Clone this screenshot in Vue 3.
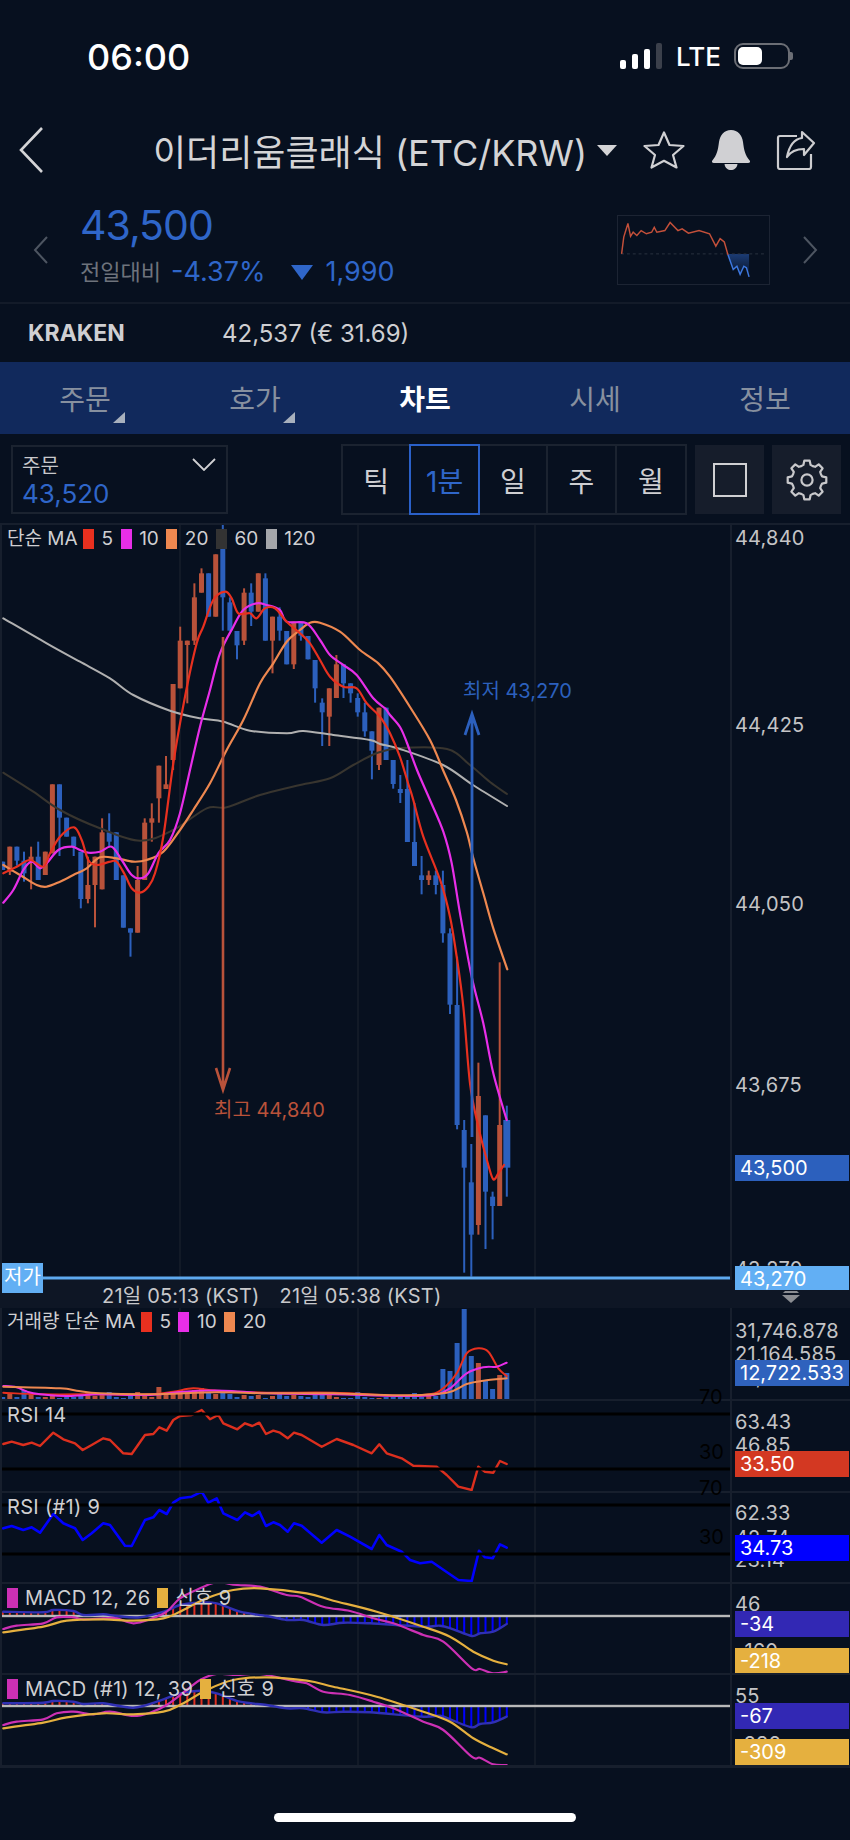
<template>
  <div class="screen">
    <!-- status bar -->
    <div class="status">
      <span class="clock">06:00</span>
      <div class="status-right">
        <div class="signal">
          <i v-for="(h, n) in [9, 15, 20, 26]" :key="n" :class="{ off: n === 3 }" :style="{ height: h + 'px' }"></i>
        </div>
        <span class="lte">LTE</span>
        <div class="battery"><b></b></div>
        <div class="nub"></div>
      </div>
    </div>

    <!-- title row -->
    <header class="head">
      <svg class="back" width="26" height="48" viewBox="0 0 26 48">
        <path d="M24 2 L3 24 L24 46" fill="none" stroke="#d4d4d6" stroke-width="2.6" />
      </svg>
      <h1 class="title">이더리움클래식 (ETC/KRW)</h1>
      <span class="title-caret"></span>
      <svg class="star" width="42" height="38" viewBox="0 0 42 38">
        <path d="M21 1.5 L26.5 14 L40.5 15 L30 24 L33.5 36.5 L21 29.8 L8.5 36.5 L12 24 L1.5 15 L15.5 14Z" fill="none" stroke="#d0d0d3" stroke-width="2.2" stroke-linejoin="round" />
      </svg>
      <svg class="bell" width="38" height="40" viewBox="0 0 38 40">
        <path d="M19 0 C26 0 30 5 31 12 C32 20 33 25 38 31 Q38.5 33 36 33 H2 Q-.5 33 0 31 C5 25 6 20 7 12 C8 5 12 0 19 0Z M12.5 34 H25.5 C25 38 22 40 19 40 C16 40 13 38 12.5 34Z" fill="#d0d0d3" />
      </svg>
      <svg class="share" width="42" height="40" viewBox="0 0 42 40">
        <path d="M22 6 H5 Q3 6 3 8 V37 Q3 39 5 39 H34 Q36 39 36 37 V24" fill="none" stroke="#cdcdd0" stroke-width="2.2" />
        <path d="M27 2 L39 13 L29 25 V19 C21 19 16 21 12 27 C14 17 19 9 27 8Z" fill="none" stroke="#cdcdd0" stroke-width="2.2" stroke-linejoin="round" />
      </svg>
    </header>

    <!-- price row -->
    <section class="price-row">
      <svg class="nav-arrow" width="15" height="28" viewBox="0 0 15 28">
        <path d="M14 1 L2 14 L14 27" fill="none" stroke="#4d5561" stroke-width="2" />
      </svg>
      <div class="price-info">
        <div class="price">43,500</div>
        <div class="change">
          <span class="change-label">전일대비</span>
          <span class="change-pct">-4.37%</span>
          <span class="change-tri"></span>
          <span class="change-abs">1,990</span>
        </div>
      </div>
      <svg class="mini" width="153" height="70" viewBox="617 215 153 70">
        <defs>
          <linearGradient id="miniFill" x1="0" y1="0" x2="0" y2="1">
            <stop offset="0" stop-color="#2c60bd" stop-opacity="0.55" />
            <stop offset="1" stop-color="#2c60bd" stop-opacity="0" />
          </linearGradient>
        </defs>
        <path :d="miniFill" fill="url(#miniFill)" />
        <path d="M619 254 H766" stroke="#2a3240" stroke-width="1" stroke-dasharray="3 3" />
        <path :d="miniRed" fill="none" stroke="#c4503a" stroke-width="1.5" />
        <path :d="miniBlue" fill="none" stroke="#3d78e0" stroke-width="1.5" />
      </svg>
      <svg class="nav-arrow next" width="15" height="28" viewBox="0 0 15 28">
        <path d="M1 1 L13 14 L1 27" fill="none" stroke="#4d5561" stroke-width="2" />
      </svg>
    </section>

    <section class="exchange">
      <span class="ex-name">KRAKEN</span>
      <span class="ex-price">42,537 (€ 31.69)</span>
    </section>

    <!-- tabs -->
    <nav class="tabs">
      <div v-for="t in tabs" :key="t.name" class="tab" :class="{ active: t.active }">
        {{ t.name }}
        <i v-if="t.corner" class="corner"></i>
      </div>
    </nav>

    <!-- chart controls -->
    <section class="controls">
      <div class="order-box">
        <div>
          <div class="order-label">주문</div>
          <div class="order-price">43,520</div>
        </div>
        <svg class="order-caret" width="24" height="13" viewBox="0 0 24 13">
          <path d="M1 1 L12 12 L23 1" fill="none" stroke="#d0d0d3" stroke-width="1.8" />
        </svg>
      </div>
      <div class="periods">
        <div v-for="p in periods" :key="p" class="period" :class="{ active: p === '1분' }">{{ p }}</div>
      </div>
      <button class="icon-btn first"><span class="square"></span></button>
      <button class="icon-btn">
        <svg width="42" height="42" viewBox="-21 -21 42 42">
          <path :d="gearPath" fill="none" stroke="#c8c8cb" stroke-width="2.2" stroke-linejoin="round" />
          <circle r="5.6" fill="none" stroke="#c8c8cb" stroke-width="2.2" />
        </svg>
      </button>
    </section>

    <!-- chart stack -->
    <section class="chart">
      <template v-for="p in panels" :key="p.id">
        <div class="panel" :class="p.id" :style="{ height: p.h + 'px' }">
          <svg class="plot" width="728" :height="p.h" :viewBox="`2 ${p.top} 728 ${p.h}`">
            <rect v-for="x in gridX" :key="x" :x="x - 1" :y="p.top" width="2" :height="p.h" fill="#121a27" />
            <rect v-for="(b, n) in p.bars || []" :key="'b' + n" :x="b.x" :y="b.y" :width="b.w" :height="b.h" :fill="b.c" />
            <template v-if="p.candles">
              <g v-for="(c, n) in candles" :key="'c' + n" :fill="c.c">
                <rect :x="c.x - 1" :y="c.wt" width="2" :height="c.wb - c.wt" />
                <rect :x="c.x - c.w / 2" :y="c.bt" :width="c.w" :height="c.bb - c.bt" />
              </g>
            </template>
            <rect v-if="p.zero" x="2" :y="p.zero - 1.2" width="728" height="2.4" fill="#b9b9b9" />
            <path v-for="(l, n) in p.lines" :key="'l' + n" :d="l.d" fill="none" :stroke="l.c" :stroke-width="l.w || 2" stroke-linejoin="round" stroke-linecap="round" />
            <rect v-for="y in p.black || []" :key="y" x="2" :y="y - 1.5" width="728" height="3" fill="#000" />
            <template v-if="p.candles">
              <path d="M223 637 V1088 M216 1068 L223 1090 L230 1068" fill="none" stroke="#b9523a" stroke-width="2.6" />
              <path d="M472 715 V1137 M465 735 L472 714 L479 735" fill="none" stroke="#2c60bd" stroke-width="2.8" />
              <rect x="2" y="1276.5" width="728" height="3" fill="#5ea9ef" />
            </template>
          </svg>

          <div class="legend">
            <template v-for="(item, n) in p.legend" :key="n">
              <i v-if="item.c" class="swatch" :style="{ background: item.c }"></i>
              <span v-else>{{ item.t }}</span>
            </template>
          </div>

          <template v-if="p.candles">
            <span class="note note-high">최고 44,840</span>
            <span class="note note-low">최저 43,270</span>
            <span class="low-tag">저가</span>
          </template>

          <span v-for="m in p.marks || []" :key="m.y" class="mark" :style="{ top: m.y - p.top - 14 + 'px' }">{{ m.t }}</span>

          <div class="axis">
            <span v-for="a in p.axis" :key="a.t" class="tick" :style="{ top: a.y - p.top - 12 + 'px' }">{{ a.t }}</span>
            <span v-for="g in p.tags" :key="g.t" class="tag" :style="{ top: g.y - p.top + 'px', height: g.h + 'px', background: g.c }">{{ g.t }}</span>
          </div>
        </div>

        <div v-if="p.candles" class="time-strip">
          <span>21일 05:13 (KST)</span>
          <span>21일 05:38 (KST)</span>
          <svg class="scroll-hint" width="18" height="12" viewBox="0 0 18 12">
            <path d="M3 0 H15 L17 2 H1Z M0 4 H18 L9 12Z" fill="#8b8d92" />
          </svg>
        </div>
      </template>
    </section>

    <div class="home"></div>
  </div>
</template>

<script setup>
const tabs = [
  { name: '주문', corner: true },
  { name: '호가', corner: true },
  { name: '차트', active: true },
  { name: '시세' },
  { name: '정보' },
]
const periods = ['틱', '1분', '일', '주', '월']
const gridX = [180, 358, 535]

const RED = '#b9523a'
const BLUE = '#2c60bd'

// path helpers
const fmt = (n) => Math.round(n * 10) / 10
const straight = (pts) => 'M' + pts.map(([x, y]) => `${fmt(x)} ${fmt(y)}`).join('L')
const smooth = (pts) => {
  let d = `M${fmt(pts[0][0])} ${fmt(pts[0][1])}`
  for (let i = 0; i < pts.length - 1; i++) {
    const p0 = pts[i - 1] || pts[i]
    const p1 = pts[i]
    const p2 = pts[i + 1]
    const p3 = pts[i + 2] || p2
    d += `C${fmt(p1[0] + (p2[0] - p0[0]) / 6)} ${fmt(p1[1] + (p2[1] - p0[1]) / 6)} ${fmt(p2[0] - (p3[0] - p1[0]) / 6)} ${fmt(p2[1] - (p3[1] - p1[1]) / 6)} ${fmt(p2[0])} ${fmt(p2[1])}`
  }
  return d
}
// series were read off 3x crops, so x/y come in crop pixels with a y origin
const crop = (ox, oy, pts) => pts.map(([x, y]) => [ox + x / 3, oy + y / 3])
const interp = (pts, x) => {
  if (x <= pts[0][0]) return pts[0][1]
  for (let i = 1; i < pts.length; i++) {
    if (x <= pts[i][0]) {
      const t = (x - pts[i - 1][0]) / (pts[i][0] - pts[i - 1][0])
      return pts[i - 1][1] + (pts[i][1] - pts[i - 1][1]) * t
    }
  }
  return pts[pts.length - 1][1]
}

// gear icon
const gearPath = (() => {
  const out = []
  const teeth = 8
  for (let i = 0; i < teeth; i++) {
    const a = (i / teeth) * Math.PI * 2 - Math.PI / 2
    const s = (Math.PI * 2) / teeth
    const at = (r, o) => `${fmt(Math.cos(a + o * s) * r)} ${fmt(Math.sin(a + o * s) * r)}`
    out.push(`${i ? 'L' : 'M'}${at(15, -0.5)}L${at(15.5, -0.3)}L${at(19.5, -0.18)}L${at(19.5, 0.18)}L${at(15.5, 0.3)}`)
  }
  return out.join('') + 'Z'
})()

// mini chart
const mini = (pts) => pts.map(([x, y]) => [x / 1.845, y / 3])
const miniRedPts = mini([[1143, 762], [1147, 710], [1155, 668], [1160, 708], [1165, 695], [1172, 705], [1180, 690], [1190, 700], [1200, 695], [1205, 680], [1210, 695], [1225, 690], [1235, 665], [1250, 690], [1258, 685], [1270, 698], [1290, 690], [1310, 700], [1322, 738], [1330, 715], [1338, 725], [1345, 765]])
const miniBluePts = mini([[1345, 765], [1355, 810], [1362, 800], [1368, 825], [1375, 800], [1380, 805], [1385, 833]])
const miniRed = straight(miniRedPts)
const miniBlue = straight(miniBluePts)
const miniFill = straight(miniBluePts) + `L${fmt(miniBluePts[6][0])} 254L${fmt(miniBluePts[0][0])} 254Z`

// candles: colour, wick top, body top, body bottom, wick bottom
const firstRows = [
  [B(), 1025, 1025, 1050, 1050], [R(), 980, 980, 1055, 1065], [B(), 980, 980, 1022, 1037], [B(), 995, 1022, 1060, 1085],
  [R(), 980, 1010, 1025, 1108], [B(), 965, 1010, 1080, 1080], [R(), 995, 995, 1065, 1065], [R(), 793, 793, 1000, 1000],
  [B(), 793, 793, 893, 1008], [B(), 893, 893, 950, 950], [B(), 950, 950, 980, 1008], [B(), 995, 995, 1137, 1165],
  [R(), 1010, 1095, 1137, 1150], [R(), 1010, 1010, 1095, 1222], [R(), 895, 937, 1108, 1108], [B(), 880, 937, 965, 980],
  [B(), 937, 937, 1080, 1080], [B(), 1066, 1066, 1223, 1223], [B(), 1225, 1225, 1238, 1310], [R(), 1038, 1080, 1238, 1238],
  [R(), 895, 908, 1080, 1080], [R(), 850, 895, 908, 965], [R(), 737, 737, 835, 908], [R(), 708, 793, 807, 807],
  [R(), 492, 492, 720, 750], [R(), 320, 362, 505, 505], [R(), 362, 362, 375, 550], [R(), 190, 232, 362, 375],
  [R(), 145, 160, 218, 218], [B(), 160, 160, 290, 290], [R(), 103, 103, 290, 290], [B(), 15, 85, 232, 332],
  [B(), 232, 247, 332, 332], [B(), 333, 333, 376, 418], [R(), 205, 218, 362, 375], [B(), 190, 218, 275, 318],
  [R(), 160, 160, 275, 275], [B(), 160, 175, 362, 362], [R(), 290, 290, 362, 460], [B(), 262, 290, 332, 362],
  [B(), 333, 333, 433, 433], [R(), 305, 305, 433, 447], [B(), 305, 305, 347, 362], [B(), 348, 348, 418, 418],
  [B(), 420, 420, 505, 548], [B(), 535, 548, 577, 678], [R(), 505, 505, 590, 678], [R(), 405, 433, 534, 534],
  [B(), 433, 433, 490, 534], [B(), 490, 490, 520, 548], [B(), 520, 534, 577, 590], [B(), 548, 577, 634, 650],
  [B(), 634, 634, 692, 778], [R(), 563, 563, 735, 750], [B(), 563, 563, 720, 720], [B(), 720, 720, 792, 806],
  [B(), 765, 807, 819, 849], [B(), 720, 807, 966, 966], [B(), 849, 966, 1038, 1038],
]
const lastRows = [
  [B(), 168, 226, 240, 283], [R(), 212, 226, 240, 255], [B(), 212, 226, 255, 283], [B(), 212, 255, 400, 428],
  [B(), 385, 400, 614, 642], [B(), 470, 615, 975, 988], [B(), 960, 990, 1103, 1418], [B(), 1032, 1147, 1304, 1430],
  [R(), 788, 888, 1275, 1304], [B(), 946, 946, 1175, 1347], [B(), 1175, 1190, 1218, 1318], [R(), 487, 975, 1218, 1218],
  [B(), 917, 960, 1103, 1190],
]
function R() { return RED }
function B() { return BLUE }

const rowsReal = [
  ...firstRows.map(([c, ...r]) => [c, ...r.map((v) => 520 + v / 3)]),
  ...lastRows.map(([c, ...r]) => [c, ...r.map((v) => 800 + v / 3)]),
]
const candleX = (i) => 2.7 + 7.1 * i
const candles = rowsReal.map(([c, wt, bt, bb, wb], i) => ({
  c, wt, bt, bb, wb,
  x: candleX(i),
  w: i === rowsReal.length - 1 ? 7 : 5,
}))

// moving averages on the price panel
const ma5 = [
  ...crop(0, 520, [[10, 1060], [50, 1040], [90, 1020], [130, 1040], [150, 1000], [180, 950], [222, 922], [245, 960], [265, 1020], [290, 1035], [330, 1025], [350, 1025], [375, 1065], [395, 1105], [420, 1118], [445, 1100], [465, 1060], [490, 950], [520, 730], [555, 530], [590, 370], [610, 320], [640, 240], [675, 215], [695, 235], [715, 280], [750, 280], [770, 295], [795, 265], [825, 265], [860, 305], [900, 340], [930, 370], [960, 420], [990, 470], [1030, 500], [1070, 505], [1100, 550], [1140, 590], [1170, 640]]),
  [400, 757], [408, 783],
  ...crop(350, 800, [[190, 0], [220, 110], [272, 245], [300, 350], [320, 470], [340, 620], [360, 850], [385, 980], [415, 1095], [430, 1138], [445, 1120], [462, 1095]]),
]
const ma10 = [
  ...crop(0, 520, [[10, 1148], [40, 1110], [70, 1050], [95, 1025], [120, 1045], [140, 1030], [175, 990], [215, 980], [240, 990], [265, 998], [300, 995], [335, 980], [365, 1020], [395, 1065], [420, 1075], [445, 1060], [475, 1000], [510, 960], [540, 880], [570, 750], [600, 620], [630, 510], [660, 400], [700, 320], [730, 270], [770, 250], [800, 255], [840, 270], [860, 305], [920, 310], [960, 360], [990, 405], [1030, 435], [1070, 465], [1120, 535], [1155, 565]]),
  [390, 715], [400, 727], [407, 743], [417, 770],
  ...crop(350, 800, [[240, 0], [280, 95], [305, 190], [330, 340], [365, 530], [400, 670], [430, 820], [470, 960]]),
]
const ma20 = [
  ...crop(0, 520, [[10, 1035], [60, 1065], [110, 1095], [140, 1100], [180, 1085], [220, 1065], [260, 1045], [300, 1012], [350, 1015], [400, 1025], [440, 1020], [490, 995], [540, 930], [580, 870], [630, 790], [680, 690], [730, 600], [780, 490], [820, 430], [860, 365], [900, 330], [930, 308], [960, 308], [1020, 335], [1080, 390], [1135, 430], [1170, 470]]),
  [410, 707], [430, 740], [443, 770],
  ...crop(350, 800, [[318, 0], [350, 95], [370, 175], [400, 280], [430, 385], [472, 508]]),
]
const ma60 = [
  ...crop(0, 520, [[10, 758], [100, 815], [180, 870], [300, 925], [420, 962], [520, 930], [620, 865], [680, 862], [780, 825], [900, 795], [990, 775], [1060, 735]]),
  [377, 753], [400, 748], [447, 749], [470, 765], [490, 782], [507, 794],
]
const ma120 = [
  ...crop(0, 520, [[10, 295], [140, 370], [240, 425], [330, 475], [400, 525], [510, 572], [600, 595], [670, 605], [750, 632], [860, 640], [910, 633], [1000, 645], [1110, 660]]),
  [380, 744], [400, 749], [443, 765], [473, 785], [507, 806],
]

// volume
const volHeights = [2, 6, 2, 9, 5, 2, 2, 3, 1, 2, 2, 3, 6, 3, 5, 7, 2, 1, 3, 7, 3, 2, 12, 5, 6, 9, 8, 9, 11, 6, 5, 6, 5, 2, 4, 3, 4, 1, 3, 5, 3, 4, 3, 2, 7, 6, 6, 2, 1, 1, 7, 2, 1, 1, 2, 2, 3, 3, 6, 2, 3, 3, 30, 28, 56, 90, 43, 36, 19, 10, 24, 26]
const volBars = candles.map((c, i) => ({ x: c.x - 2.5, y: 1399 - volHeights[i], w: 5, h: volHeights[i], c: c.c }))
const volRed = crop(0, 1260, [[10, 398], [120, 403], [300, 403], [450, 403], [520, 395], [580, 385], [650, 392], [800, 398], [1000, 398], [1200, 407], [1290, 403], [1330, 385], [1370, 340], [1400, 280], [1435, 265], [1465, 275], [1495, 325], [1520, 348]])
const volPink = crop(0, 1260, [[10, 378], [50, 382], [100, 400], [200, 408], [300, 403], [450, 405], [550, 395], [670, 392], [800, 400], [1000, 403], [1200, 408], [1300, 405], [1350, 385], [1400, 340], [1450, 322], [1490, 320], [1520, 308]])
const volOrange = crop(0, 1260, [[10, 380], [180, 385], [230, 392], [300, 400], [450, 403], [650, 397], [800, 400], [1000, 400], [1200, 406], [1340, 398], [1400, 372], [1450, 362], [1520, 355]])

// RSI
const rsi14 = crop(0, 1260, [[10, 552], [35, 545], [70, 555], [95, 548], [120, 558], [160, 518], [190, 538], [225, 550], [248, 570], [275, 555], [310, 535], [330, 540], [370, 580], [395, 582], [435, 525], [460, 522], [478, 502], [500, 512], [520, 480], [540, 468], [575, 465], [605, 450], [630, 478], [655, 465], [670, 490], [712, 508], [735, 490], [757, 498], [778, 488], [798, 522], [820, 512], [840, 518], [863, 535], [882, 518], [905, 525], [965, 560], [1010, 537], [1060, 555], [1115, 580], [1138, 553], [1160, 580], [1205, 595], [1240, 617], [1310, 620], [1340, 645], [1375, 680], [1415, 690], [1435, 620], [1455, 635], [1480, 638], [1500, 603], [1520, 612]])
const rsi9 = crop(0, 1260, [[10, 805], [35, 798], [70, 810], [95, 802], [120, 818], [160, 762], [190, 790], [225, 805], [248, 840], [275, 820], [310, 790], [330, 795], [375, 857], [395, 858], [435, 780], [460, 772], [478, 750], [500, 762], [520, 728], [540, 715], [575, 710], [605, 695], [625, 728], [650, 715], [670, 760], [712, 780], [735, 757], [757, 768], [778, 755], [798, 798], [820, 787], [840, 795], [863, 815], [882, 790], [905, 797], [965, 848], [1010, 810], [1050, 830], [1115, 867], [1138, 825], [1160, 855], [1205, 875], [1230, 900], [1260, 910], [1295, 905], [1375, 960], [1415, 963], [1437, 872], [1455, 892], [1478, 895], [1500, 853], [1520, 863]])

// MACD
const macdA = {
  pink: crop(0, 1530, [[10, 297], [50, 287], [130, 280], [170, 262], [220, 262], [250, 268], [310, 265], [350, 265], [400, 280], [450, 268], [500, 245], [540, 205], [600, 175], [650, 157], [710, 165], [780, 170], [860, 195], [900, 200], [970, 230], [1050, 243], [1120, 265], [1180, 280], [1270, 315], [1330, 335], [1415, 415], [1440, 417], [1480, 430], [1520, 425]]),
  gold: crop(0, 1530, [[10, 307], [130, 290], [200, 272], [310, 268], [400, 272], [490, 265], [540, 245], [620, 205], [700, 180], [780, 175], [920, 190], [1000, 212], [1130, 245], [1270, 290], [1350, 320], [1420, 365], [1480, 392], [1520, 403]]),
  hist: crop(0, 1530, [[10, 245], [130, 247], [160, 240], [220, 243], [250, 255], [310, 253], [350, 258], [420, 262], [500, 242], [540, 225], [600, 218], [650, 220], [720, 245], [800, 258], [860, 270], [910, 270], [970, 285], [1030, 278], [1110, 280], [1270, 290], [1320, 287], [1360, 298], [1415, 318], [1440, 310], [1480, 305], [1520, 282]]),
}
const macdB = {
  pink: crop(0, 1530, [[10, 585], [50, 575], [130, 568], [170, 550], [220, 545], [280, 553], [330, 545], [400, 558], [450, 548], [500, 525], [560, 480], [600, 450], [650, 432], [710, 435], [780, 432], [880, 453], [920, 460], [970, 485], [1050, 495], [1120, 515], [1180, 535], [1270, 575], [1330, 600], [1415, 680], [1440, 683], [1480, 703], [1520, 705]]),
  gold: crop(0, 1530, [[10, 595], [130, 578], [200, 562], [310, 550], [400, 553], [490, 545], [540, 525], [620, 480], [700, 450], [800, 442], [920, 452], [1000, 470], [1130, 500], [1270, 545], [1350, 575], [1420, 625], [1480, 655], [1520, 673]]),
  hist: crop(0, 1530, [[10, 520], [130, 518], [160, 513], [220, 515], [250, 522], [310, 520], [400, 533], [480, 512], [540, 490], [600, 482], [650, 490], [720, 515], [800, 525], [860, 535], [910, 535], [970, 547], [1030, 545], [1110, 547], [1270, 560], [1320, 557], [1360, 572], [1415, 592], [1440, 582], [1480, 577], [1520, 560]]),
}
const histBars = (line, zero) =>
  candles.map((c) => {
    const y = interp(line, c.x)
    return { x: c.x - 1, y: Math.min(y, zero), w: 2, h: Math.abs(y - zero), c: y < zero ? '#e03020' : '#0000ff' }
  })
const macdLines = (m) => [
  { d: smooth(m.hist), c: '#3030b4', w: 2.4 },
  { d: smooth(m.pink), c: '#cc30b4', w: 2.2 },
  { d: smooth(m.gold), c: '#e5b03f', w: 2.2 },
]

const panels = [
  {
    id: 'main', top: 525, h: 755, candles: true,
    legend: [{ t: '단순 MA' }, { c: '#e8301f' }, { t: '5' }, { c: '#e82ee8' }, { t: '10' }, { c: '#ee8850' }, { t: '20' }, { c: '#333333' }, { t: '60' }, { c: '#a4a6aa' }, { t: '120' }],
    lines: [
      { d: smooth(ma60), c: '#38352f' },
      { d: smooth(ma120), c: '#b0b0b0' },
      { d: smooth(ma20), c: '#ee8850', w: 2.2 },
      { d: smooth(ma10), c: '#e82ee8', w: 2.2 },
      { d: smooth(ma5), c: '#e8301f', w: 2.2 },
    ],
    axis: [{ y: 538, t: '44,840' }, { y: 725, t: '44,425' }, { y: 904, t: '44,050' }, { y: 1085, t: '43,675' }, { y: 1269, t: '43,270' }],
    tags: [{ y: 1155, h: 26, c: '#2c60bd', t: '43,500' }, { y: 1266, h: 24, c: '#62aff4', t: '43,270 ' }],
  },
  {
    id: 'vol', top: 1308, h: 91, bars: volBars,
    legend: [{ t: '거래량 단순 MA' }, { c: '#e8301f' }, { t: '5' }, { c: '#e82ee8' }, { t: '10' }, { c: '#ee8850' }, { t: '20' }],
    lines: [
      { d: smooth(volRed), c: '#e8301f' },
      { d: smooth(volPink), c: '#e82ee8' },
      { d: smooth(volOrange), c: '#ee8850' },
    ],
    axis: [{ y: 1331, t: '31,746.878' }, { y: 1354, t: '21,164.585' }, { y: 1377, t: '10,582.293' }],
    tags: [{ y: 1360, h: 26, c: '#2f62bd', t: '12,722.533' }],
  },
  {
    id: 'rsi', top: 1401, h: 90, black: [1414, 1469],
    legend: [{ t: 'RSI 14' }],
    lines: [{ d: straight(rsi14), c: '#dc2f1e', w: 2.4 }],
    marks: [{ y: 1397, t: '70' }, { y: 1452, t: '30' }],
    axis: [{ y: 1422, t: '63.43' }, { y: 1445, t: '46.85' }],
    tags: [{ y: 1451, h: 26, c: '#d33822', t: '33.50' }],
  },
  {
    id: 'rsi2', top: 1493, h: 89, black: [1505, 1554],
    legend: [{ t: 'RSI (#1) 9' }],
    lines: [{ d: straight(rsi9), c: '#0000ff', w: 2.6 }],
    marks: [{ y: 1488, t: '70' }, { y: 1537, t: '30' }],
    axis: [{ y: 1513, t: '62.33' }, { y: 1538, t: '42.74' }, { y: 1560, t: '23.14' }],
    tags: [{ y: 1535, h: 26, c: '#0000ff', t: '34.73' }],
  },
  {
    id: 'macd', top: 1584, h: 89, zero: 1616, bars: histBars(macdA.hist, 1616),
    legend: [{ c: '#cc30b4' }, { t: 'MACD 12, 26' }, { c: '#e5b03f' }, { t: '신호 9' }],
    lines: macdLines(macdA),
    axis: [{ y: 1604, t: '46' }, { y: 1651, t: '-160' }],
    tags: [{ y: 1611, h: 26, c: '#3228b4', t: '-34' }, { y: 1648, h: 25, c: '#e5b03f', t: '-218' }],
  },
  {
    id: 'macd2', top: 1675, h: 90, zero: 1706, bars: histBars(macdB.hist, 1706),
    legend: [{ c: '#cc30b4' }, { t: 'MACD (#1) 12, 39' }, { c: '#e5b03f' }, { t: '신호 9' }],
    lines: macdLines(macdB),
    axis: [{ y: 1696, t: '55' }, { y: 1744, t: '-232' }],
    tags: [{ y: 1703, h: 26, c: '#3228b4', t: '-67' }, { y: 1739, h: 26, c: '#e5b03f', t: '-309' }],
  },
]
</script>

<style scoped>
.screen {
  width: 850px;
  height: 1840px;
  background: #07101f;
  color: #d0d0d3;
  font-family: Inter, "Noto Sans CJK KR", sans-serif;
  overflow: hidden;
}

/* status bar */
.status {
  height: 110px;
  display: flex;
  align-items: flex-start;
  justify-content: space-between;
  padding: 34px 57px 0 87px;
  box-sizing: border-box;
}
.clock {
  font-size: 36px;
  line-height: 46px;
  font-weight: 500;
  color: #fff;
}
.status-right {
  display: flex;
  align-items: center;
  height: 44px;
}
.signal {
  display: flex;
  align-items: flex-end;
  gap: 6px;
  height: 26px;
}
.signal i {
  width: 6px;
  border-radius: 2px;
  background: #fff;
}
.signal i.off {
  background: #3b404b;
}
.lte {
  margin-left: 14px;
  font-size: 26px;
  font-weight: 500;
  color: #fff;
}
.battery {
  margin-left: 13px;
  width: 56px;
  height: 26px;
  box-sizing: border-box;
  border: 2px solid #6b6e75;
  border-radius: 9px;
  padding: 2px;
}
.battery b {
  display: block;
  width: 24px;
  height: 18px;
  border-radius: 5px;
  background: #fff;
}
.nub {
  width: 3px;
  height: 8px;
  background: #6b6e75;
  border-radius: 0 2px 2px 0;
}

/* title row */
.head {
  height: 80px;
  display: flex;
  align-items: center;
  padding-left: 18px;
}
.back {
  flex: none;
}
.title {
  margin: 0 0 0 109px;
  font-size: 36px;
  font-weight: 400;
  white-space: nowrap;
  color: #d4d4d6;
  width: 444px;
}
.title-caret {
  width: 0;
  height: 0;
  border-left: 10px solid transparent;
  border-right: 10px solid transparent;
  border-top: 11px solid #d4d4d6;
}
.star {
  margin-left: 26px;
}
.bell {
  margin-left: 27px;
}
.share {
  margin-left: 25px;
}

/* price row */
.price-row {
  height: 114px;
  box-sizing: border-box;
  border-bottom: 2px solid #131b29;
  display: flex;
  padding-left: 33px;
}
.nav-arrow {
  margin-top: 46px;
  flex: none;
}
.nav-arrow.next {
  margin-left: 33px;
}
.price-info {
  margin-left: 32px;
  width: 537px;
  padding-top: 10px;
}
.price {
  font-size: 41px;
  line-height: 50px;
  letter-spacing: -1px;
  color: #2f66c9;
}
.change {
  display: flex;
  align-items: center;
  font-size: 27px;
  line-height: 34px;
  margin-top: 5px;
}
.change-label {
  color: #6e737c;
  font-size: 22px;
}
.change-pct {
  color: #2f66c9;
  margin-left: 10px;
}
.change-tri {
  width: 0;
  height: 0;
  margin-left: 26px;
  border-left: 11px solid transparent;
  border-right: 11px solid transparent;
  border-top: 15px solid #2f66c9;
}
.change-abs {
  color: #2f66c9;
  margin-left: 12px;
}
.mini {
  flex: none;
  margin-top: 25px;
  box-sizing: border-box;
  border: 1px solid #1c2433;
}

/* exchange row */
.exchange {
  height: 58px;
  display: flex;
  align-items: center;
  padding-left: 28px;
}
.ex-name {
  font-size: 23px;
  font-weight: 700;
  width: 194px;
  color: #cfcfd2;
}
.ex-price {
  font-size: 24px;
  color: #cfcfd2;
}

/* tabs */
.tabs {
  height: 72px;
  background: #11295c;
  display: flex;
}
.tab {
  flex: 1;
  position: relative;
  display: flex;
  align-items: center;
  justify-content: center;
  font-size: 28px;
  color: #87909f;
}
.tab.active {
  color: #fff;
  font-weight: 700;
}
.corner {
  position: absolute;
  right: 45px;
  bottom: 11px;
  width: 0;
  height: 0;
  border-left: 12px solid transparent;
  border-bottom: 11px solid #a8b0bd;
}

/* controls */
.controls {
  height: 89px;
  box-sizing: border-box;
  display: flex;
  align-items: flex-start;
  padding: 11px 0 0 11px;
}
.order-box {
  width: 217px;
  height: 69px;
  box-sizing: border-box;
  border: 2px solid #1b2330;
  padding: 6px 10px 0 9px;
  display: flex;
  justify-content: space-between;
  align-items: flex-start;
}
.order-label {
  font-size: 20px;
  line-height: 26px;
  color: #c8c8cb;
}
.order-price {
  font-size: 26px;
  line-height: 30px;
  color: #2f66c9;
}
.order-caret {
  margin-top: 5px;
}
.periods {
  width: 346px;
  height: 71px;
  margin-left: 113px;
  margin-top: -1px;
  box-sizing: border-box;
  display: grid;
  grid-template-columns: repeat(5, 1fr);
  border: 2px solid #1b2330;
}
.period {
  display: flex;
  align-items: center;
  justify-content: center;
  font-size: 28px;
  color: #cfcfd2;
  border-right: 2px solid #1b2330;
}
.period:last-child {
  border-right: 0;
}
.period.active {
  color: #2f66c9;
  margin: -2px 0 -2px -2px;
  border: 2px solid #2a60c8;
}
.icon-btn {
  width: 69px;
  height: 69px;
  margin-left: 8px;
  padding: 0;
  border: 0;
  background: #161d2b;
  display: flex;
  align-items: center;
  justify-content: center;
}
.square {
  width: 34px;
  height: 34px;
  box-sizing: border-box;
  border: 2px solid #d0d0d3;
}

/* chart stack */
.chart {
  width: 850px;
  box-sizing: border-box;
  padding: 2px 0 3px;
  display: flex;
  flex-direction: column;
  gap: 2px;
  background: #171f2d;
}
.panel {
  position: relative;
  display: flex;
  border-left: 2px solid #171f2d;
  background: #07101f;
}
.panel.main {
  z-index: 2;
  margin-bottom: -2px;
}
.plot {
  flex: none;
  display: block;
}
.legend {
  position: absolute;
  left: 5px;
  top: 4px;
  display: flex;
  align-items: center;
  gap: 7.5px;
  font-size: 19px;
  line-height: 20px;
  color: #cfcfd2;
  white-space: nowrap;
}
.legend span:first-child {
  margin-right: -2px;
}
.rsi .legend,
.rsi2 .legend,
.macd .legend,
.macd2 .legend {
  font-size: 20px;
  letter-spacing: 0.3px;
  gap: 7px;
}
.swatch {
  width: 11px;
  height: 20px;
}
.note {
  position: absolute;
  font-size: 20px;
  line-height: 24px;
  white-space: nowrap;
}
.note-high {
  left: 212px;
  top: 573px;
  color: #b9523a;
}
.note-low {
  left: 461px;
  top: 154px;
  color: #2c60bd;
}
.low-tag {
  position: absolute;
  left: 0;
  top: 738px;
  width: 41px;
  height: 30px;
  background: #62aff4;
  color: #fff;
  font-size: 20px;
  line-height: 29px;
  text-align: center;
}
.mark {
  position: absolute;
  left: 697px;
  font-size: 20px;
  line-height: 28px;
  color: #000;
  z-index: 1;
}
.axis {
  position: relative;
  flex: none;
  width: 120px;
  box-sizing: border-box;
  border-left: 2px solid #171f2d;
}
.tick {
  position: absolute;
  left: 3px;
  font-size: 20px;
  line-height: 24px;
  letter-spacing: 0.2px;
  color: #c4c4c6;
  white-space: nowrap;
}
.tag {
  position: absolute;
  left: 3px;
  right: 1px;
  padding-left: 5px;
  font-size: 20px;
  line-height: 26px;
  color: #fff;
}
.time-strip {
  position: relative;
  height: 28px;
  flex: none;
  margin-bottom: -2px;
  background: #0e1625;
  display: flex;
  align-items: center;
  gap: 20px;
  padding-left: 102px;
  font-size: 20px;
  letter-spacing: 0.2px;
  color: #c8c8cb;
}
.scroll-hint {
  position: absolute;
  left: 782px;
  top: 11px;
}

.home {
  width: 302px;
  height: 9px;
  margin: 45px auto 0;
  border-radius: 5px;
  background: #fff;
}
</style>

<style>
html,
body {
  margin: 0;
  background: #07101f;
}
</style>
